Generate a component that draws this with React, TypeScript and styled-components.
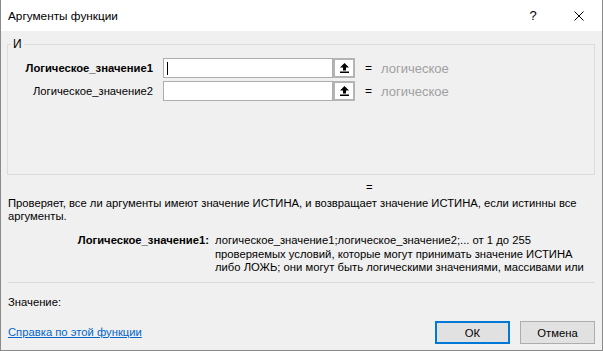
import React from 'react';
import styled, { createGlobalStyle } from 'styled-components';

const Global = createGlobalStyle`
  html, body { margin: 0; padding: 0; background: #f0f0f0; }
  body {
    font-family: "Liberation Sans", Arial, sans-serif;
    font-size: 11.25px;
    color: #000;
  }
  * { box-sizing: border-box; }
`;

const Window = styled.div`
  width: 603px;
  height: 351px;
  border: 1px solid #8a8a8a;
  border-top: none;
  background: #f0f0f0;
  display: flex;
  flex-direction: column;
  overflow: hidden;
`;

const TitleBar = styled.div`
  height: 31px;
  background: #fff;
  display: flex;
  align-items: center;
  flex-shrink: 0;
`;

const Title = styled.div`
  flex: 1;
  padding-left: 7px;
  font-size: 11.8px;
`;

const CaptionButton = styled.div`
  width: 46px;
  height: 31px;
  display: flex;
  align-items: center;
  justify-content: center;
  font-size: 13px;
`;

const Body = styled.div`
  flex: 1;
  display: flex;
  flex-direction: column;
  padding: 0 7px 6px 6px;
`;

const Group = styled.fieldset`
  margin: 6px 0 0 0;
  padding: 0;
  height: 138px;
  border: 1px solid #dcdcdc;
  min-width: 0;
  flex-shrink: 0;
`;

const Legend = styled.legend`
  margin-left: 3px;
  padding: 0 2px;
  line-height: 14px;
  font-size: 12px;
`;

const Rows = styled.div`
  display: flex;
  flex-direction: column;
  gap: 3px;
  margin-top: 7px;
`;

const Row = styled.div`
  display: flex;
  align-items: center;
  height: 20px;
`;

const ArgLabel = styled.div<{ $active?: boolean }>`
  width: 155px;
  padding-right: 10px;
  text-align: right;
  font-weight: ${p => (p.$active ? 'bold' : 'normal')};
  white-space: nowrap;
`;

const Field = styled.div`
  width: 170px;
  height: 20px;
  background: #fff;
  border: 1px solid #adadad;
  display: flex;
  align-items: center;
  padding-left: 3px;
`;

const Caret = styled.span`
  width: 1px;
  height: 13px;
  background: #000;
`;

const RefButton = styled.div`
  width: 22px;
  height: 20px;
  border: 2px solid #b4b4b4;
  background: #fff;
  display: flex;
  align-items: center;
  justify-content: center;
`;

const Eq = styled.span`
  margin-left: 10px;
  width: 6px;
  font-size: 12px;
`;

const Value = styled.span`
  margin-left: 10px;
  color: #a0a0a0;
  font-size: 13px;
`;

const EqLine = styled.div`
  margin-top: 6px;
  padding-left: 359px;
  line-height: 13px;
`;

const Description = styled.div`
  margin-top: 3px;
  padding-left: 1px;
  line-height: 13px;
`;

const ArgHelp = styled.div`
  display: flex;
  margin-top: 11px;
  line-height: 13.5px;
`;

const ArgHelpLabel = styled.div`
  width: 208px;
  padding-right: 6px;
  text-align: right;
  font-weight: bold;
  white-space: nowrap;
`;

const ArgHelpText = styled.div`
  flex: 1;
  height: 41px;
  overflow: hidden;
  white-space: nowrap;
`;

const Separator = styled.div`
  margin-top: 7px;
  height: 1px;
  background: #dcdcdc;
  margin-left: 1px;
`;

const ResultLine = styled.div`
  margin-top: 12px;
  padding-left: 1px;
  line-height: 14px;
`;

const Footer = styled.div`
  margin-top: auto;
  display: flex;
  align-items: center;
  padding-left: 1px;
`;

const HelpLink = styled.a`
  flex: 1;
  color: #0066cc;
  text-decoration: underline;
  padding-bottom: 2px;
`;

const Button = styled.div<{ $primary?: boolean }>`
  width: 75px;
  height: 23px;
  margin-left: 10px;
  background: #e1e1e1;
  border: ${p => (p.$primary ? '2px solid #0078d7' : '1px solid #adadad')};
  display: flex;
  align-items: center;
  justify-content: center;
`;

const UpArrow = () => (
  <svg width="9" height="10" viewBox="0 0 9 10">
    <path d="M4.5 0 L9 4.5 L6 4.5 L6 7.5 L3 7.5 L3 4.5 L0 4.5 Z" fill="#000" />
    <rect x="0" y="8.5" width="9" height="1.5" fill="#000" />
  </svg>
);

const CloseIcon = () => (
  <svg width="10" height="10" viewBox="0 0 10 10">
    <path d="M0.5 0.5 L9.5 9.5 M9.5 0.5 L0.5 9.5" stroke="#000" strokeWidth="1" />
  </svg>
);

const args = [
  { name: 'Логическое_значение1', active: true },
  { name: 'Логическое_значение2', active: false },
];

export default function App() {
  return (
    <>
      <Global />
      <Window>
        <TitleBar>
          <Title>Аргументы функции</Title>
          <CaptionButton>?</CaptionButton>
          <CaptionButton>
            <CloseIcon />
          </CaptionButton>
        </TitleBar>
        <Body>
          <Group>
            <Legend>И</Legend>
            <Rows>
              {args.map(a => (
                <Row key={a.name}>
                  <ArgLabel $active={a.active}>{a.name}</ArgLabel>
                  <Field>{a.active && <Caret />}</Field>
                  <RefButton>
                    <UpArrow />
                  </RefButton>
                  <Eq>=</Eq>
                  <Value>логическое</Value>
                </Row>
              ))}
            </Rows>
          </Group>
          <EqLine>=</EqLine>
          <Description>
            Проверяет, все ли аргументы имеют значение ИСТИНА, и возвращает значение ИСТИНА, если истинны все
            <br />
            аргументы.
          </Description>
          <ArgHelp>
            <ArgHelpLabel>Логическое_значение1:</ArgHelpLabel>
            <ArgHelpText>
              логическое_значение1;логическое_значение2;... от 1 до 255
              <br />
              проверяемых условий, которые могут принимать значение ИСТИНА
              <br />
              либо ЛОЖЬ; они могут быть логическими значениями, массивами или
            </ArgHelpText>
          </ArgHelp>
          <Separator />
          <ResultLine>Значение:</ResultLine>
          <Footer>
            <HelpLink href="#">Справка по этой функции</HelpLink>
            <Button $primary>ОК</Button>
            <Button>Отмена</Button>
          </Footer>
        </Body>
      </Window>
    </>
  );
}
